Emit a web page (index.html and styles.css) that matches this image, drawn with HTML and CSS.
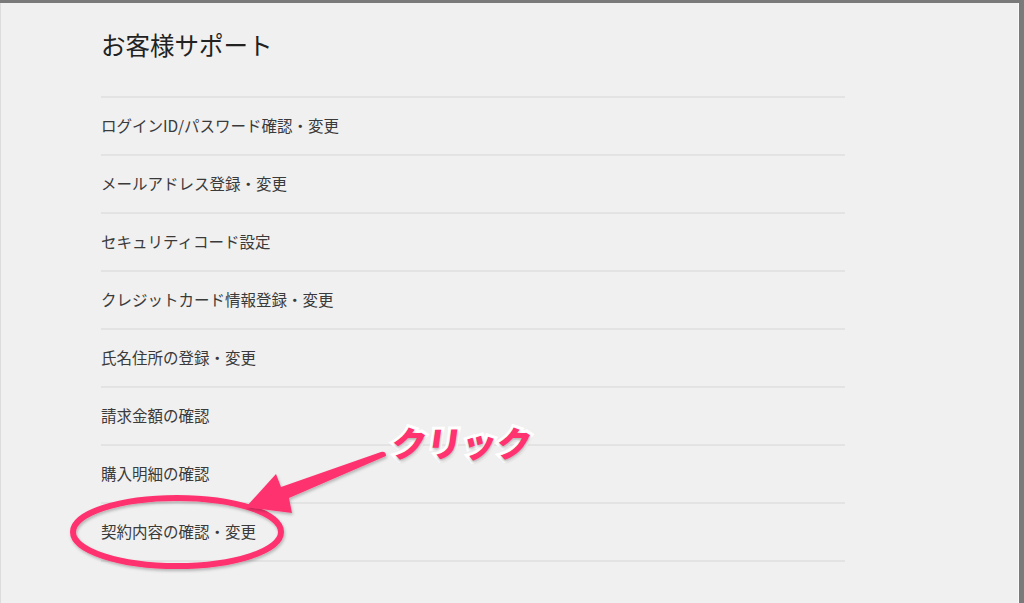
FILE: index.html
```html
<!DOCTYPE html>
<html lang="ja">
<head>
    <meta charset="UTF-8">
    <meta name="viewport" content="width=device-width, initial-scale=1.0">
    <title>お客様サポート</title>
    <link rel="stylesheet" href="styles.css">
</head>
<body>
    <div class="frame">
        <div class="content">
            <h1 class="title">お客様サポート</h1>
            <ul class="menu">
                <li><a href="#">ログインID/パスワード確認・変更</a></li>
                <li><a href="#">メールアドレス登録・変更</a></li>
                <li><a href="#">セキュリティコード設定</a></li>
                <li><a href="#">クレジットカード情報登録・変更</a></li>
                <li><a href="#">氏名住所の登録・変更</a></li>
                <li><a href="#">請求金額の確認</a></li>
                <li><a href="#">購入明細の確認</a></li>
                <li><a href="#">契約内容の確認・変更</a></li>
            </ul>
        </div>

        <!-- annotation drawn over the screenshot -->
        <svg class="marks" width="1024" height="603" viewBox="0 0 1024 603">
            <defs>
                <filter id="shadow" x="-10%" y="-10%" width="120%" height="130%">
                    <feDropShadow dx="1" dy="2" stdDeviation="1.5" flood-color="#000" flood-opacity="0.25"/>
                </filter>
            </defs>
            <ellipse cx="177" cy="532" rx="104" ry="34" fill="none" stroke="#ff3370" stroke-width="6" filter="url(#shadow)"/>
            <path d="M381 452 Q386 451 386 456 L289 498 L292 513 L246 507 L276 474 L281 487 Z" fill="#ff3370" filter="url(#shadow)"/>
        </svg>
        <div class="callout">クリック</div>
    </div>
</body>
</html>
```

FILE: styles.css
```css
html, body {
    margin: 0;
    padding: 0;
}
body {
    width: 1024px;
    height: 603px;
    overflow: hidden;
    background-color: #7a7a7a;
    font-family: "Noto Sans CJK JP", "Noto Sans", sans-serif;
    color: #333;
}
.frame {
    position: relative;
    box-sizing: border-box;
    height: 603px;
    margin: 3px 5px 0 0;
    background-color: #f0f0f0;
    border-left: 1px solid #dcdcdc;
    border-right: 1px solid #fafafa;
}
.content {
    width: 744px;
    padding-left: 100px;
}
.title {
    margin: 0;
    padding: 26px 0 35px;
    font-size: 24.5px;
    line-height: 32px;
    font-weight: normal;
    color: #222;
}
.menu {
    list-style-type: none;
    margin: 0;
    padding: 0;
}
.menu li {
    border-top: 2px solid #e3e3e3;
    height: 56px;
    display: flex;
    align-items: center;
}
.menu li:last-child {
    border-bottom: 2px solid #e3e3e3;
}
.menu a {
    text-decoration: none;
    color: #3a3a3a;
    font-size: 15.5px;
    padding-bottom: 3px;
}
.marks {
    position: absolute;
    left: -1px;
    top: -3px;
    pointer-events: none;
}
.callout {
    position: absolute;
    left: 391px;
    top: 417px;
    font-size: 35px;
    font-weight: 900;
    line-height: 44px;
    color: #ff3370;
    letter-spacing: 0;
    transform: skewX(-8deg);
    -webkit-text-stroke: 6px #fff;
    paint-order: stroke fill;
    text-shadow: 1px 2px 3px rgba(0, 0, 0, 0.3);
}
```
